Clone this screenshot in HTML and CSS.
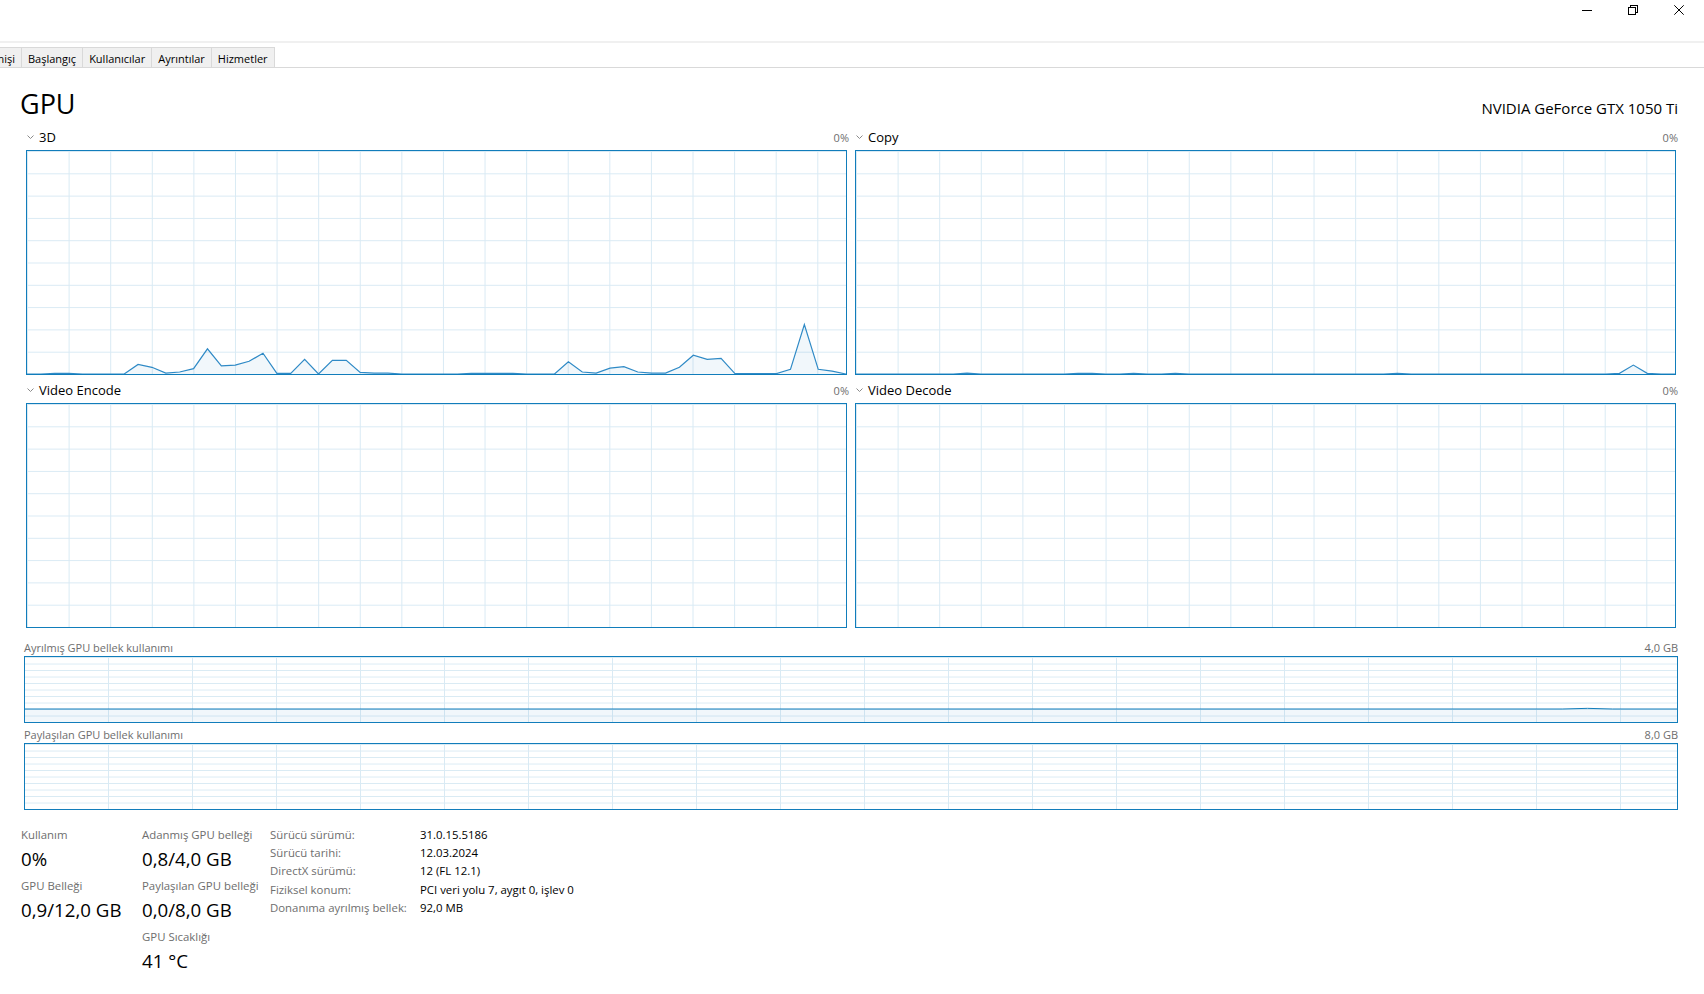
FILE: index.html
```html
<!DOCTYPE html>
<html lang="tr">
<head>
<meta charset="utf-8">
<title>Görev Yöneticisi - GPU</title>
<link rel="stylesheet" href="styles.css">
</head>
<body>
<div class="titlebar">
  <div class="capbtn"><svg viewBox="0 0 10 10" shape-rendering="crispEdges"><line x1="0" y1="5.5" x2="10" y2="5.5" stroke="#000" stroke-width="1"/></svg></div>
  <div class="capbtn"><svg viewBox="0 0 10 10" shape-rendering="crispEdges"><rect x="0.5" y="2.5" width="7" height="7" fill="none" stroke="#000"/><path d="M2.5 2.5V0.5H9.5V7.5H7.5" fill="none" stroke="#000"/></svg></div>
  <div class="capbtn"><svg viewBox="0 0 10 10"><path d="M0.3 0.3L9.7 9.7M9.7 0.3L0.3 9.7" stroke="#000" stroke-width="1" fill="none"/></svg></div>
</div>
<div class="band"></div>
<nav class="tabstrip">
  <div class="tab cut"><span>Uygulama geçmişi</span></div>
  <div class="tab">Başlangıç</div>
  <div class="tab">Kullanıcılar</div>
  <div class="tab">Ayrıntılar</div>
  <div class="tab">Hizmetler</div>
</nav>
<main class="content">
  <header class="head">
    <h1 class="title">GPU</h1>
    <div class="adapter">NVIDIA GeForce GTX 1050 Ti</div>
  </header>

  <section class="engines">
    <div class="engine">
      <div class="engine-head">
        <svg class="chev" viewBox="0 0 7 4"><path d="M0.5 0.5L3.5 3.5L6.5 0.5" fill="none" stroke="#8a8a8a" stroke-width="1"/></svg>
        <span class="engine-name">3D</span>
        <span class="pct">0%</span>
      </div>
      <div class="graph">
        <svg viewBox="0 0 59 100" preserveAspectRatio="none">
          <polygon class="area" points="0,100 1,100 2,99.7 3,99.7 4,100 5,100 6,100 7,100 8,95.7 9,97 10,99.6 11,99.1 12,97.6 13,88.7 14,96.4 15,96 16,94.3 17,90.7 18,99.7 19,99.7 20,93.4 21,100 22,93.9 23,93.9 24,99.3 25,99.6 26,99.6 27,100 28,100 29,100 30,100 31,100 32,99.7 33,99.7 34,99.7 35,99.7 36,100 37,100 38,100 39,94.5 40,99.1 41,99.6 42,97.4 43,96.7 44,99.1 45,99.6 46,99.6 47,97 48,91.6 49,93.4 50,93 51,99.8 52,99.8 53,99.8 54,99.8 55,97.9 56,77.8 57,97.9 58,98.7 59,100"/>
          <polyline class="line" points="0,100 1,100 2,99.7 3,99.7 4,100 5,100 6,100 7,100 8,95.7 9,97 10,99.6 11,99.1 12,97.6 13,88.7 14,96.4 15,96 16,94.3 17,90.7 18,99.7 19,99.7 20,93.4 21,100 22,93.9 23,93.9 24,99.3 25,99.6 26,99.6 27,100 28,100 29,100 30,100 31,100 32,99.7 33,99.7 34,99.7 35,99.7 36,100 37,100 38,100 39,94.5 40,99.1 41,99.6 42,97.4 43,96.7 44,99.1 45,99.6 46,99.6 47,97 48,91.6 49,93.4 50,93 51,99.8 52,99.8 53,99.8 54,99.8 55,97.9 56,77.8 57,97.9 58,98.7 59,100"/>
        </svg>
      </div>
    </div>
    <div class="engine">
      <div class="engine-head">
        <svg class="chev" viewBox="0 0 7 4"><path d="M0.5 0.5L3.5 3.5L6.5 0.5" fill="none" stroke="#8a8a8a" stroke-width="1"/></svg>
        <span class="engine-name">Copy</span>
        <span class="pct">0%</span>
      </div>
      <div class="graph">
        <svg viewBox="0 0 59 100" preserveAspectRatio="none">
          <polygon class="area" points="0,100 7,100 8,99.6 9,100 15,100 16,99.7 17,99.7 18,100 19,100 20,99.7 21,100 22,100 23,99.7 24,100 38,100 39,99.7 40,100 54,100 55,99.7 56,96 57,99.7 58,100 59,100"/>
          <polyline class="line" points="0,100 7,100 8,99.6 9,100 15,100 16,99.7 17,99.7 18,100 19,100 20,99.7 21,100 22,100 23,99.7 24,100 38,100 39,99.7 40,100 54,100 55,99.7 56,96 57,99.7 58,100 59,100"/>
        </svg>
      </div>
    </div>
    <div class="engine">
      <div class="engine-head">
        <svg class="chev" viewBox="0 0 7 4"><path d="M0.5 0.5L3.5 3.5L6.5 0.5" fill="none" stroke="#8a8a8a" stroke-width="1"/></svg>
        <span class="engine-name">Video Encode</span>
        <span class="pct">0%</span>
      </div>
      <div class="graph"></div>
    </div>
    <div class="engine">
      <div class="engine-head">
        <svg class="chev" viewBox="0 0 7 4"><path d="M0.5 0.5L3.5 3.5L6.5 0.5" fill="none" stroke="#8a8a8a" stroke-width="1"/></svg>
        <span class="engine-name">Video Decode</span>
        <span class="pct">0%</span>
      </div>
      <div class="graph"></div>
    </div>
  </section>

  <section class="mem">
    <div class="mem-head"><span>Ayrılmış GPU bellek kullanımı</span><span>4,0 GB</span></div>
    <div class="mem-graph">
      <svg viewBox="0 0 59 100" preserveAspectRatio="none">
        <polygon class="area" points="0,100 0,80 54.9,80 55.8,79 56.7,80 59,80 59,100"/>
        <polyline class="memline" points="0,80 54.9,80 55.8,79 56.7,80 59,80"/>
      </svg>
    </div>
    <div class="mem-head second"><span>Paylaşılan GPU bellek kullanımı</span><span>8,0 GB</span></div>
    <div class="mem-graph"></div>
  </section>

  <section class="stats">
    <div class="col col1">
      <div class="stat"><div class="stat-label">Kullanım</div><div class="stat-value">0%</div></div>
      <div class="stat"><div class="stat-label">GPU Belleği</div><div class="stat-value">0,9/12,0 GB</div></div>
    </div>
    <div class="col col2">
      <div class="stat"><div class="stat-label">Adanmış GPU belleği</div><div class="stat-value">0,8/4,0 GB</div></div>
      <div class="stat"><div class="stat-label">Paylaşılan GPU belleği</div><div class="stat-value">0,0/8,0 GB</div></div>
      <div class="stat"><div class="stat-label">GPU Sıcaklığı</div><div class="stat-value">41 °C</div></div>
    </div>
    <div class="details">
      <div class="dl">Sürücü sürümü:</div><div class="dv">31.0.15.5186</div>
      <div class="dl">Sürücü tarihi:</div><div class="dv">12.03.2024</div>
      <div class="dl">DirectX sürümü:</div><div class="dv">12 (FL 12.1)</div>
      <div class="dl">Fiziksel konum:</div><div class="dv">PCI veri yolu 7, aygıt 0, işlev 0</div>
      <div class="dl">Donanıma ayrılmış bellek:</div><div class="dv">92,0 MB</div>
    </div>
  </section>
</main>
</body>
</html>
```
FILE: styles.css
```css
* { box-sizing: border-box; }
html, body { margin: 0; padding: 0; }
body {
  width: 1704px;
  height: 994px;
  overflow: hidden;
  background: #fff;
  color: #000;
  font-family: "Open Sans", "Noto Sans", sans-serif;
}

/* window chrome */
.titlebar {
  height: 41px;
  display: flex;
  justify-content: flex-end;
  align-items: flex-start;
  padding-right: 2px;
}
.capbtn {
  width: 46px;
  height: 20px;
  display: flex;
  align-items: center;
  justify-content: center;
}
.capbtn svg { width: 10px; height: 10px; display: block; }
.band { height: 2px; background: #f0f0f0; }

.tabstrip {
  margin-top: 4px;
  height: 21px;
  border-bottom: 1px solid #d9d9d9;
  display: flex;
}
.tab {
  height: 20px;
  display: flex;
  align-items: center;
  padding: 2px 6px 0;
  background: #f0f0f0;
  border-top: 1px solid #d9d9d9;
  border-right: 1px solid #d9d9d9;
  font-size: 11px;
  white-space: nowrap;
  color: #000;
}
.tab.cut {
  width: 22px;
  justify-content: flex-end;
  overflow: hidden;
}
.tab.cut span { flex: none; }

/* content */
.content { padding: 0 26px 0 20px; }
.head {
  display: flex;
  justify-content: space-between;
  align-items: baseline;
  padding-top: 18px;
  height: 58px;
}
.title {
  margin: 0;
  font-weight: 400;
  font-size: 27px;
  line-height: 36px;
}
.adapter { font-size: 15px; }

.engines {
  margin-left: 6px;
  display: grid;
  grid-template-columns: 823px 1fr;
  column-gap: 6px;
  row-gap: 4px;
}
.engine-head {
  height: 24px;
  display: flex;
  align-items: center;
  padding-bottom: 2px;
}
.chev { width: 7px; height: 4px; margin: 0 5px 0 1px; flex: none; }
.engine-name { font-size: 13px; }
.pct { margin-left: auto; font-size: 11px; color: #6e6e6e; }

.graph, .mem-graph {
  border: 1px solid #117dbb;
  background-color: #fff;
}
.graph {
  height: 225px;
  margin-right: 2px;
  background-image:
    linear-gradient(to right, transparent calc(100% - 1px), #d9eaf4 calc(100% - 1px)),
    linear-gradient(to bottom, transparent calc(100% - 1px), #d9eaf4 calc(100% - 1px));
  background-size: 41.6px 100%, 100% 10%;
  background-position: 1px 0, 0 1px;
}
.graph svg, .mem-graph svg { display: block; width: 100%; height: 100%; }
.area { fill: rgba(17, 125, 187, 0.06); stroke: none; }
.line {
  fill: none;
  stroke: #2f8ac6;
  stroke-width: 1.2;
  vector-effect: non-scaling-stroke;
  stroke-linejoin: miter;
}
.memline {
  fill: none;
  stroke: #117dbb;
  stroke-width: 1;
  vector-effect: non-scaling-stroke;
}

.mem { margin: 10px 0 0 4px; }
.mem-head {
  height: 18px;
  display: flex;
  align-items: center;
  justify-content: space-between;
  font-size: 11px;
  color: #6e6e6e;
}
.mem-head.second { margin-top: 2px; }
.mem-graph {
  height: 67px;
  background-image:
    linear-gradient(to right, transparent 83px, #d9eaf4 83px, #d9eaf4 84px, transparent 84px),
    linear-gradient(to bottom, transparent calc(100% - 1px), #d9eaf4 calc(100% - 1px));
  background-size: 84px 100%, 100% 10%;
  background-position: 0 0, 0 1px;
}

/* stats */
.stats { display: flex; margin-top: 16px; padding-left: 1px; }
.col { padding-top: 1px; }
.col1 { width: 121px; }
.col2 { width: 128px; }
.stat { margin-bottom: 3px; }
.stat-label { font-size: 11.4px; line-height: 16px; color: #6e6e6e; white-space: nowrap; }
.stat-value { font-size: 18.7px; line-height: 32px; white-space: nowrap; }
.details {
  display: grid;
  grid-template-columns: 150px auto;
  align-content: start;
  font-size: 11.4px;
  line-height: 18.2px;
}
.dl { color: #6e6e6e; white-space: nowrap; }
.dv { color: #000; white-space: nowrap; }
```
